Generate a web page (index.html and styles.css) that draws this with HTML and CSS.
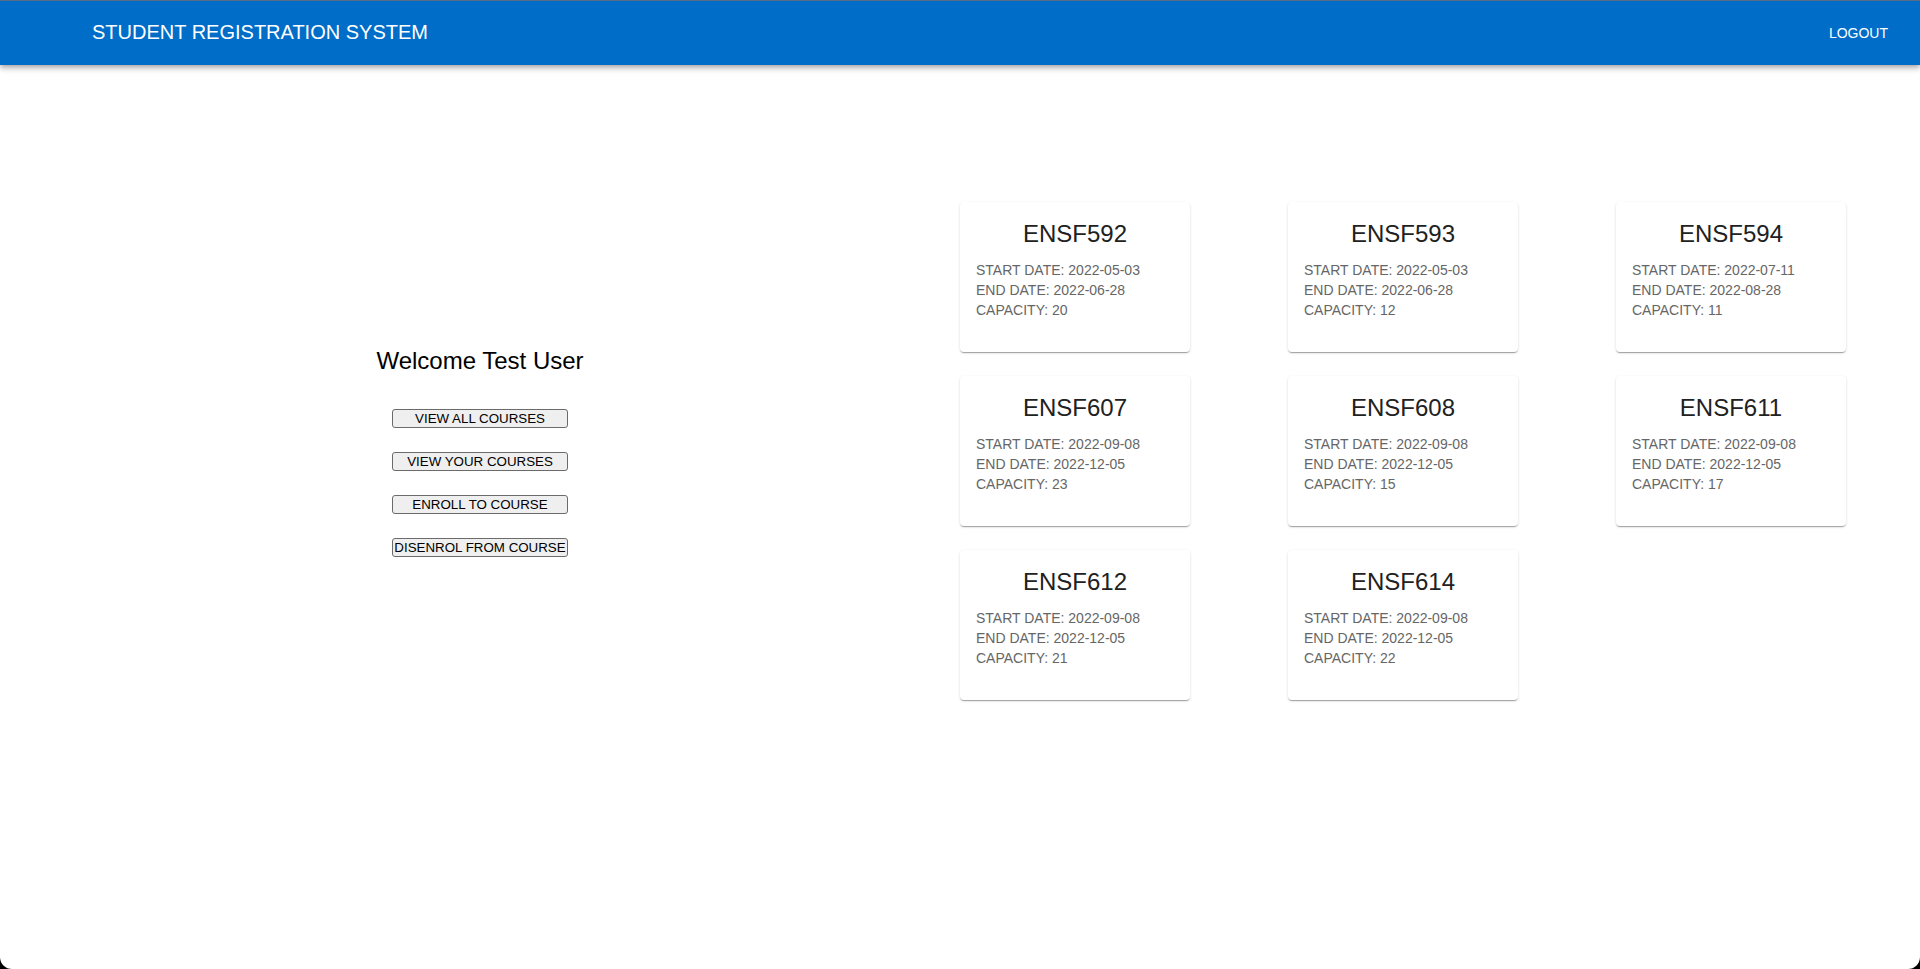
FILE: index.html
```html
<!DOCTYPE html>
<html lang="en">
<head>
<meta charset="utf-8">
<title>Student Registration System</title>
<link rel="stylesheet" href="styles.css">
</head>
<body>
<header class="app-bar">
  <h1 class="app-title">STUDENT REGISTRATION SYSTEM</h1>
  <button class="logout" type="button">LOGOUT</button>
</header>
<main class="content">
  <section class="menu">
    <h2 class="welcome">Welcome Test User</h2>
    <div class="actions">
      <button class="action" type="button">VIEW ALL COURSES</button>
      <button class="action" type="button">VIEW YOUR COURSES</button>
      <button class="action" type="button">ENROLL TO COURSE</button>
      <button class="action" type="button">DISENROL FROM COURSE</button>
    </div>
  </section>
  <section class="courses">
    <article class="card"><h3 class="code">ENSF592</h3><p class="info">START DATE: 2022-05-03<br>END DATE: 2022-06-28<br>CAPACITY: 20</p></article>
    <article class="card"><h3 class="code">ENSF593</h3><p class="info">START DATE: 2022-05-03<br>END DATE: 2022-06-28<br>CAPACITY: 12</p></article>
    <article class="card"><h3 class="code">ENSF594</h3><p class="info">START DATE: 2022-07-11<br>END DATE: 2022-08-28<br>CAPACITY: 11</p></article>
    <article class="card"><h3 class="code">ENSF607</h3><p class="info">START DATE: 2022-09-08<br>END DATE: 2022-12-05<br>CAPACITY: 23</p></article>
    <article class="card"><h3 class="code">ENSF608</h3><p class="info">START DATE: 2022-09-08<br>END DATE: 2022-12-05<br>CAPACITY: 15</p></article>
    <article class="card"><h3 class="code">ENSF611</h3><p class="info">START DATE: 2022-09-08<br>END DATE: 2022-12-05<br>CAPACITY: 17</p></article>
    <article class="card"><h3 class="code">ENSF612</h3><p class="info">START DATE: 2022-09-08<br>END DATE: 2022-12-05<br>CAPACITY: 21</p></article>
    <article class="card"><h3 class="code">ENSF614</h3><p class="info">START DATE: 2022-09-08<br>END DATE: 2022-12-05<br>CAPACITY: 22</p></article>
  </section>
</main>
</body>
</html>
```
FILE: styles.css
```css
* {
  box-sizing: border-box;
}

html {
  background: #000;
}

body {
  margin: 0;
  min-height: 100vh;
  background: #fff;
  border-radius: 0 0 12px 12px;
  font-family: "Liberation Sans", Arial, sans-serif;
  color: #000;
}

h1, h2, h3, p {
  margin: 0;
  font-weight: 400;
}

button {
  font-family: inherit;
}

.app-bar {
  display: flex;
  align-items: center;
  justify-content: space-between;
  min-height: 65px;
  padding: 0 32px 0 92px;
  border-top: 1px solid #586a88;
  background: #006ec8;
  color: #fff;
  box-shadow: 0 2px 4px -1px rgba(0, 0, 0, 0.2), 0 4px 5px rgba(0, 0, 0, 0.14), 0 1px 10px rgba(0, 0, 0, 0.12);
}

.app-title {
  padding-bottom: 2px;
  font-size: 20px;
  line-height: 32px;
}

.logout {
  padding: 0;
  border: 0;
  background: none;
  color: inherit;
  font-size: 14px;
  line-height: 24px;
}

.content {
  display: grid;
  grid-template-columns: 1fr 1fr;
  align-items: center;
  padding: 137px 0 32px;
}

.menu {
  display: flex;
  flex-direction: column;
  align-items: center;
  gap: 32px;
}

.welcome {
  font-size: 24px;
  line-height: 32px;
}

.actions {
  display: grid;
  gap: 24px;
}

.action {
  padding: 1px;
  border: 1px solid #6b6b6b;
  border-radius: 3px;
  background: #efefef;
  color: #000;
}

.courses {
  display: grid;
  grid-template-columns: repeat(3, 230px);
  justify-content: space-between;
  row-gap: 24px;
  padding-right: 74px;
}

.card {
  min-height: 150px;
  padding: 16px;
  border-radius: 4px;
  background: #fff;
  box-shadow: 0 2px 1px -1px rgba(0, 0, 0, 0.2), 0 1px 1px rgba(0, 0, 0, 0.14), 0 1px 3px rgba(0, 0, 0, 0.12);
}

.code {
  margin-bottom: 10px;
  color: #212121;
  font-size: 24px;
  line-height: 32px;
  text-align: center;
}

.info {
  color: #666;
  font-size: 14px;
  line-height: 20px;
}
```
